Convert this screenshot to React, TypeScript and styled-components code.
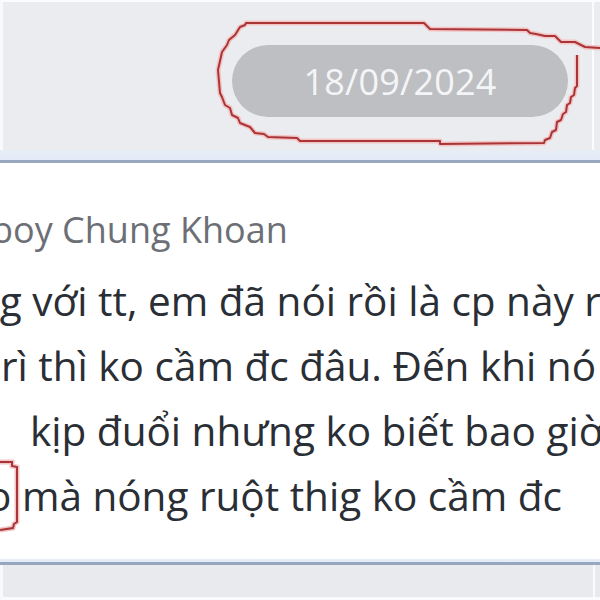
import styled, { createGlobalStyle } from "styled-components";

const GlobalStyle = createGlobalStyle`
	html, body {
		margin: 0;
		padding: 0;
		background: #ffffff;
		overflow: hidden;
	}
`;

const Page = styled.div`
	position: relative;
	width: 600px;
	height: 600px;
	overflow: hidden;
	display: flex;
	flex-direction: column;
	background: #ffffff;
	font-family: "Open Sans", "Noto Sans", sans-serif;
`;

const TopBand = styled.div`
	height: 150px;
	flex: none;
	display: flex;
	justify-content: flex-end;
	align-items: flex-start;
	padding: 43px 32px 0 0;
	box-sizing: border-box;
	border-top: 2px solid #fafbfc;
	border-left: 3px solid #f8f9fb;
	background: #ebecf0;
	box-shadow: inset -6px 0 0 #ebecf0, inset -8px 0 0 #fbfbfc;
`;

const BandEdge = styled.div<{ $tint: number }>`
	flex: none;
	height: ${(p) => p.$tint}px;
	background: linear-gradient(#e8edf5, #e2ebf7);
`;

const Rule = styled.div`
	flex: none;
	height: 3px;
	background: #97a7bd;
	box-shadow: 0 1px 1px #c9d3e0;
`;

const DatePill = styled.div`
	width: 336px;
	height: 72px;
	border-radius: 36px;
	background: #bebfc3;
	color: #f4f5f7;
	font-size: 36px;
	display: flex;
	align-items: center;
	justify-content: center;
	letter-spacing: 0.2px;
`;

const Card = styled.div`
	flex: 1;
	overflow: hidden;
	background: #ffffff;
	padding-top: 44px;
	box-sizing: border-box;
`;

const Sender = styled.div`
	margin-left: -9px;
	font-size: 36px;
	line-height: 46px;
	color: #6c6f75;
	white-space: nowrap;
`;

const Message = styled.div`
	margin-top: 15px;
	font-size: 40.5px;
	line-height: 65px;
	color: #2a2e35;
`;

const Line = styled.div<{ $shift: number }>`
	white-space: nowrap;
	margin-left: ${(p) => p.$shift}px;
`;

const BottomBand = styled.div`
	height: 32px;
	flex: none;
	background: #e9eaee;
	border-left: 3px solid #f8f9fb;
	border-bottom: 3px solid #fafbfc;
	box-shadow: inset -5px 0 0 #e9eaee, inset -7px 0 0 #fbfbfc;
`;

const Annotation = styled.svg`
	position: absolute;
	left: 0;
	top: 0;
	width: 600px;
	height: 600px;
	pointer-events: none;
`;

const loop =
	"M577,55 L577,86 L575,88 L574,95 L571,97 L570,103 L567,105 L566,112 L563,114 L561,120 L557,122 L556,130 L552,132 L550,138 L545,140 L544,143 L440,144 L440,141 L300,141 L297,138 L268,137 L264,134 L255,133 L250,127 L240,123 L238,118 L232,115 L230,108 L225,105 L222,97 L220,93 L218,70 L222,52 L227,45 L229,40 L235,35 L240,27 L245,25 L246,23 L424,23 L430,29 L527,30 L530,33 L536,34 L545,36 L555,36 L561,42 L575,42 L585,47 L600,48";

const bracket = "M0,462 L12,462 L12,466 L17,467 L17,522 L14,524 L13,528 L0,530";

const lines = [
	{ text: "ng với tt, em đã nói rồi là cp này rất", shift: -25 },
	{ text: "rì thì ko cầm đc đâu. Đến khi nó", shift: 1 },
	{ text: "kịp đuổi nhưng ko biết bao giờ", shift: 30 },
	{ text: "o mà nóng ruột thig ko cầm đc", shift: -13 },
];

export default function App() {
	return (
		<>
			<GlobalStyle />
			<Page>
				<TopBand>
					<DatePill>18/09/2024</DatePill>
				</TopBand>
				<BandEdge $tint={10} />
				<Rule />
				<Card>
					<Sender>boy Chung Khoan</Sender>
					<Message>
						{lines.map((l) => (
							<Line key={l.text} $shift={l.shift}>
								{l.text}
							</Line>
						))}
					</Message>
				</Card>
				<BandEdge $tint={3} />
				<Rule />
				<BottomBand />
				<Annotation viewBox="0 0 600 600">
					<path d={loop} fill="none" stroke="#f2c4c4" strokeWidth={5} strokeLinejoin="round" />
					<path d={loop} fill="none" stroke="#a93538" strokeWidth={2} strokeLinejoin="round" />
					<path d={bracket} fill="none" stroke="#f2c4c4" strokeWidth={5} />
					<path d={bracket} fill="none" stroke="#a93538" strokeWidth={2} />
				</Annotation>
			</Page>
		</>
	);
}
